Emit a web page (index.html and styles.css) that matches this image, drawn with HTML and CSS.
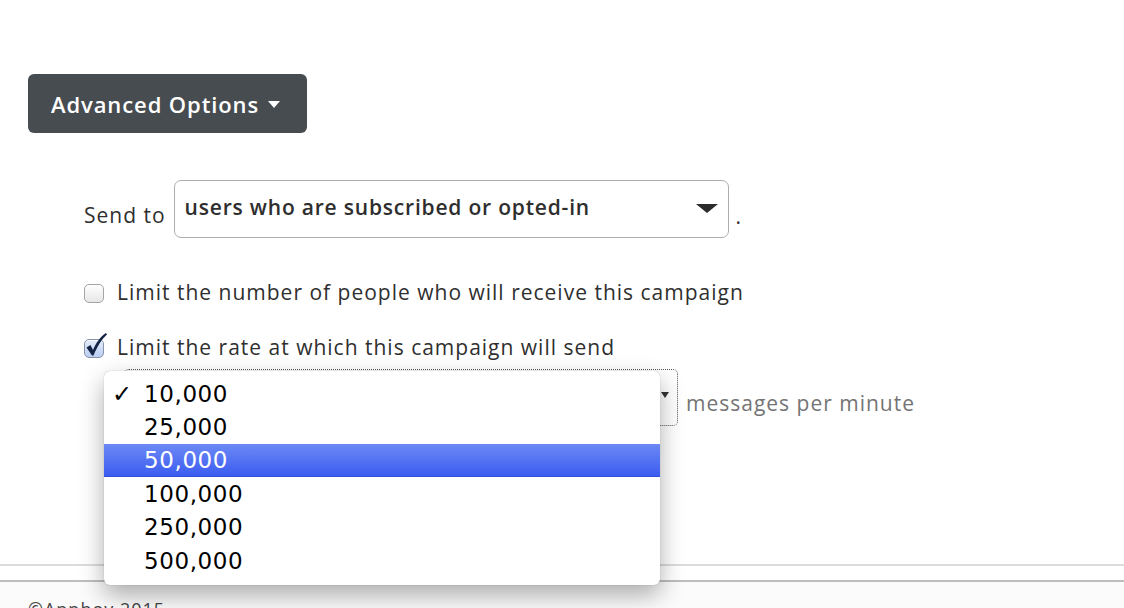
FILE: index.html
```html
<!DOCTYPE html>
<html>
<head>
<meta charset="utf-8">
<link rel="stylesheet" href="styles.css">
</head>
<body>
<main class="page">
  <button class="adv-btn">Advanced Options <span class="caret"></span></button>

  <section class="options">
    <div class="send-row">
      <span class="label">Send to</span>
      <div class="select">
        <span class="select-text">users who are subscribed or opted-in</span>
        <span class="select-arrow"></span>
      </div>
      <span class="dot">.</span>
    </div>

    <label class="check-row">
      <span class="box"></span>
      <span class="check-text">Limit the number of people who will receive this campaign</span>
    </label>

    <label class="check-row">
      <span class="box checked">
        <svg class="tick" width="24" height="26" viewBox="0 0 24 26"><path d="M2.5 15.5 L6.5 13 L9 18 C12 11 16 5 22 1 L23 2.5 C17.5 7.5 13.5 14 9.5 23.5 L8 23.5 Z" fill="#142346"/></svg>
      </span>
      <span class="check-text">Limit the rate at which this campaign will send</span>
    </label>

    <div class="rate-row">
      <div class="rate-select">
        <span class="mini-arrow"></span>
        <ul class="menu">
          <li class="item"><span class="mark">✓</span>10,000</li>
          <li class="item"><span class="mark"></span>25,000</li>
          <li class="item active"><span class="mark"></span>50,000</li>
          <li class="item"><span class="mark"></span>100,000</li>
          <li class="item"><span class="mark"></span>250,000</li>
          <li class="item"><span class="mark"></span>500,000</li>
        </ul>
      </div>
      <span class="unit">messages per minute</span>
    </div>
  </section>

  <hr class="rule-light">
</main>
<footer class="footer">
  <p class="copy">©Appboy 2015</p>
</footer>
</body>
</html>
```

FILE: styles.css
```css
html, body {
  margin: 0;
  padding: 0;
  background: #ffffff;
}
body {
  font-family: "Open Sans", "Noto Sans", sans-serif;
  color: #333;
  width: 1124px;
  height: 608px;
  overflow: hidden;
}
.page {
  padding: 74px 0 0 28px;
}
.adv-btn {
  display: flex;
  align-items: center;
  gap: 9px;
  height: 59px;
  width: 279px;
  padding: 0 0 0 23px;
  border: none;
  border-radius: 6px;
  background: #474c51;
  color: #fff;
  font-family: "Open Sans", "Noto Sans", sans-serif;
  font-size: 22px;
  font-weight: 600;
  letter-spacing: 0.9px;
}
.caret {
  width: 0;
  height: 0;
  border-left: 6.5px solid transparent;
  border-right: 6.5px solid transparent;
  border-top: 7px solid #fff;
  margin-top: 2px;
}
.options {
  padding-left: 56px;
}
.send-row {
  display: flex;
  align-items: center;
  margin-top: 47px;
  height: 58px;
}
.label {
  font-size: 21px;
  letter-spacing: 1px;
  margin-top: 12px;
  margin-right: 8px;
  color: #2f2f2f;
}
.select {
  box-sizing: border-box;
  width: 555px;
  height: 58px;
  border: 1px solid #adadad;
  border-radius: 7px;
  display: flex;
  align-items: center;
  justify-content: space-between;
  padding: 0 10px 0 10px;
}
.select-text {
  font-size: 21px;
  font-weight: 600;
  letter-spacing: 0.8px;
  color: #2e2e2e;
  margin-top: -4px;
}
.select-arrow {
  width: 0;
  height: 0;
  border-left: 11px solid transparent;
  border-right: 11px solid transparent;
  border-top: 9px solid #2b2b2b;
  margin-top: -2px;
}
.dot {
  font-size: 21px;
  margin-left: 7px;
  margin-top: 14px;
}
.check-row {
  display: flex;
  align-items: center;
  gap: 13px;
  height: 24px;
}
.send-row + .check-row {
  margin-top: 43px;
}
.check-row + .check-row {
  margin-top: 31px;
}
.check-text {
  font-size: 21px;
  letter-spacing: 1px;
  color: #2f2f2f;
  margin-top: -2px;
}
.box {
  position: relative;
  box-sizing: border-box;
  width: 20px;
  height: 19px;
  border: 1px solid #a4a4a4;
  border-radius: 5px;
  background: linear-gradient(#ffffff, #e6e6e6);
  box-shadow: inset 0 1px 1px rgba(255,255,255,0.8);
}
.box.checked {
  background: linear-gradient(#e4ecfb, #b9cdf2);
  border-color: #8592aa;
}
.tick {
  position: absolute;
  left: -1px;
  top: -8px;
}
.rate-row {
  display: flex;
  align-items: center;
  margin-top: 9px;
  padding-left: 40px;
}
.rate-select {
  position: relative;
  box-sizing: border-box;
  width: 554px;
  height: 57px;
  border: 1px dotted #555;
  border-radius: 5px;
  margin-right: 8px;
}
.mini-arrow {
  position: absolute;
  right: 8px;
  top: 22px;
  width: 0;
  height: 0;
  border-left: 4px solid transparent;
  border-right: 4px solid transparent;
  border-top: 6px solid #333;
}
.unit {
  font-size: 21px;
  letter-spacing: 1px;
  color: #747474;
  margin-top: 10px;
}
.menu {
  position: absolute;
  left: -21px;
  top: 1px;
  width: 556px;
  margin: 0;
  padding: 6px 0 8px;
  list-style: none;
  background: #fff;
  border-radius: 6px;
  box-shadow: 0 10px 24px rgba(0,0,0,0.32), 0 0 1px rgba(0,0,0,0.35);
  font-family: "DejaVu Sans", Verdana, sans-serif;
  font-size: 23px;
  letter-spacing: 0.6px;
  color: #000;
  z-index: 5;
}
.item {
  display: flex;
  align-items: center;
  height: 33.4px;
  padding-left: 8px;
}
.mark {
  width: 32px;
  font-size: 24px;
  font-weight: 700;
  letter-spacing: 0;
}
.item.active {
  background: linear-gradient(#6c89f5, #3a5bf0);
  color: #fff;
  box-shadow: inset 0 -1px 0 #2f4fd8;
}
.rule-light {
  border: none;
  border-top: 2px solid #dcdcdc;
  margin: 138px 0 0 -28px;
  width: 1124px;
}
.footer {
  margin-top: 14px;
  border-top: 2px solid #bdbdbd;
  padding: 0 0 0 28px;
  background: #fbfbfb;
  height: 40px;
}
.copy {
  margin: 15px 0 0;
  font-size: 18px;
  letter-spacing: 1px;
  color: #444;
}
```
